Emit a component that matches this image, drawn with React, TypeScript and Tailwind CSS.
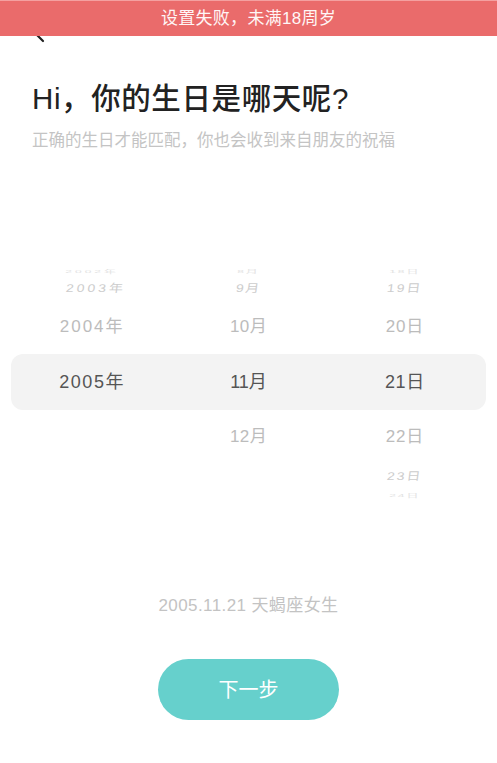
import { ChevronLeft } from "lucide-react";

type Cell = string | null;

// wheel rows, top to bottom; the middle one is the selected value
const rows: { cells: Cell[]; depth: number; h: string }[] = [
  { cells: ["2002年", "8月", "18日"], depth: 3, h: "h-[20px] items-end" },
  { cells: ["2003年", "9月", "19日"], depth: 2, h: "h-[20px] items-center" },
  { cells: ["2004年", "10月", "20日"], depth: 1, h: "h-[56px] items-center" },
  { cells: ["2005年", "11月", "21日"], depth: 0, h: "h-[56px] items-center" },
  { cells: [null, "12月", "22日"], depth: 1, h: "h-[52px] items-center" },
  { cells: [null, null, "23日"], depth: 2, h: "h-[28px] items-center" },
  { cells: [null, null, "24日"], depth: 3, h: "h-[10px] items-start" },
];

const depthStyle: Record<number, string> = {
  0: "text-[18px] text-[#555555]",
  1: "text-[17px] text-[#bcbcbc]",
  2: "text-[14px] text-[#cdcdcd] scale-y-[0.8] -skew-x-6",
  3: "text-[12px] text-[#e2e2e2] scale-y-[0.35]",
};

// year digits sit wider than month/day
const columnTracking: Record<number, string[]> = {
  0: ["tracking-[1.6px]", "tracking-[0px]", "tracking-[0.6px]"],
  1: ["tracking-[2px]", "tracking-[0.4px]", "tracking-[0.8px]"],
  2: ["tracking-[3px] translate-x-[4px]", "tracking-[1.5px]", "tracking-[2px]"],
  3: ["tracking-[3px]", "tracking-[2px]", "tracking-[2px]"],
};

function DateWheel() {
  return (
    <div className="flex flex-col">
      {rows.map((row, i) => (
        <div
          key={i}
          className={`mx-[11px] px-[3px] grid grid-cols-3 overflow-hidden ${row.h} ${
            row.depth === 0 ? "bg-[#f3f3f3] rounded-[12px]" : ""
          }`}
        >
          {row.cells.map((c, j) => (
            <div key={j} className="flex justify-center">
              {c && (
                <span
                  className={`leading-none ${depthStyle[row.depth]} ${columnTracking[row.depth][j]}`}
                >
                  {c}
                </span>
              )}
            </div>
          ))}
        </div>
      ))}
    </div>
  );
}

export default function App() {
  return (
    <div
      className="relative min-h-[763px] bg-white"
      style={{ fontFamily: '"Liberation Sans", "Noto Sans CJK SC", sans-serif' }}
    >
      <header className="h-[70px] flex items-center pl-[28px]">
        <ChevronLeft className="w-[24px] h-[24px] text-[#222]" strokeWidth={2.2} />
      </header>

      <h1 className="mt-[11px] px-[32px] text-[29.5px] leading-[36px] font-medium tracking-[0.6px] text-[#222222]">
        Hi，你的生日是哪天呢?
      </h1>
      <p className="mt-[11px] px-[32px] text-[16.5px] leading-[24px] text-[#c4c4c4]">
        正确的生日才能匹配，你也会收到来自朋友的祝福
      </p>

      <div className="mt-[106px]">
        <DateWheel />
      </div>

      <p className="mt-[94px] text-center text-[17px] leading-[24px] tracking-[0.4px] text-[#c3c3c3]">
        2005.11.21 天蝎座女生
      </p>

      <div className="mt-[41px] flex justify-center">
        <button className="w-[181px] h-[61px] rounded-full bg-[#66d0cc] text-white text-[20px]">
          下一步
        </button>
      </div>

      {/* error toast over the top of the page */}
      <div className="absolute top-0 inset-x-0 h-[36px] bg-[#ea6b6b] border-t border-[#f4a0a0] flex items-center justify-center text-[17px] tracking-[0.3px] text-[#fff6f6]">
        设置失败，未满18周岁
      </div>
    </div>
  );
}
